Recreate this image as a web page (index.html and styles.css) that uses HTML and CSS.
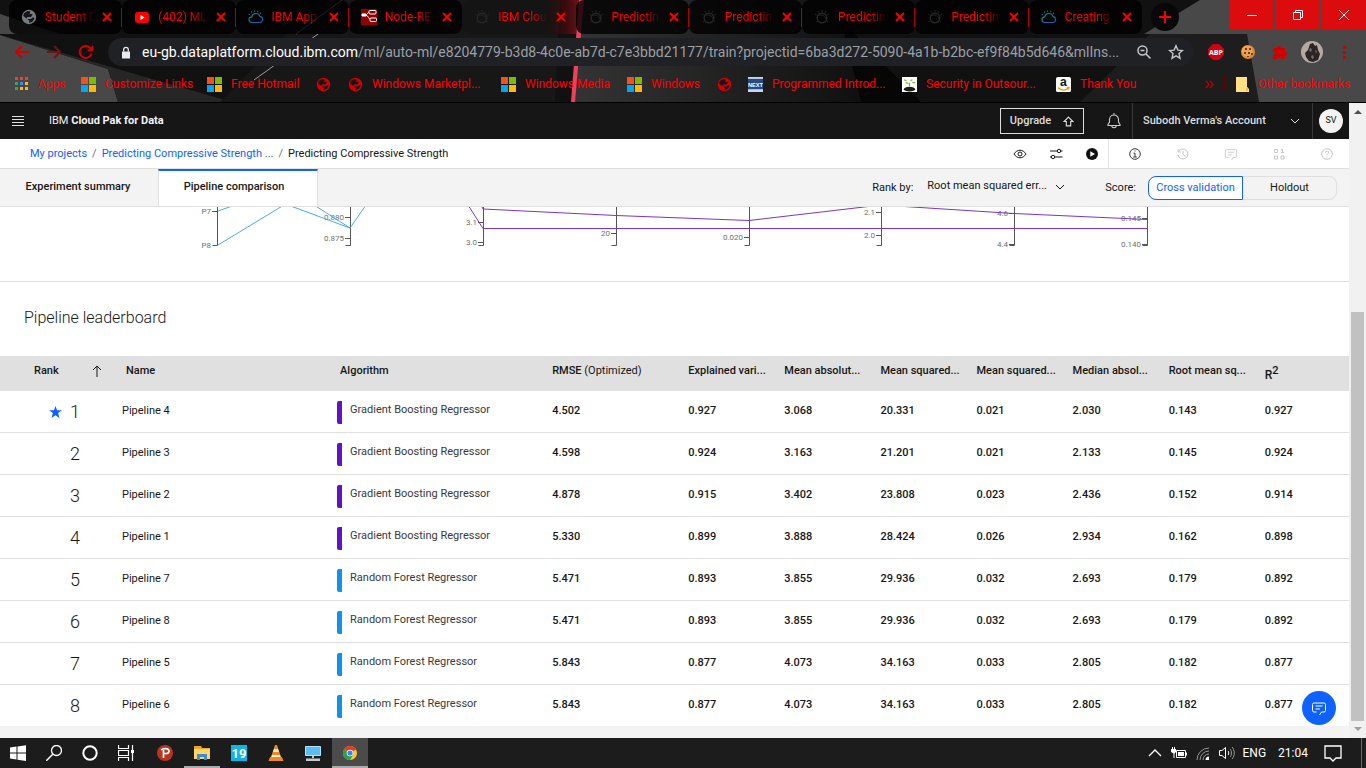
FILE: index.html
```html
<!DOCTYPE html>
<html lang="en">
<head>
<meta charset="utf-8">
<title>IBM Cloud Pak for Data</title>
<link rel="stylesheet" href="styles.css">
</head>
<body>
<svg class="defs" aria-hidden="true">
  <linearGradient id="cg" x1="0" y1="0" x2="1" y2="1"><stop offset="0" stop-color="#1b8f80"/><stop offset="1" stop-color="#1458b8"/></linearGradient>
  <linearGradient id="beam" x1="0" x2="1" y1="0" y2="0"><stop offset="0" stop-color="#600" stop-opacity="0"/><stop offset="1" stop-color="#c4141c"/></linearGradient>
  <linearGradient id="mid" x1="0" x2="1" y1="0" y2="0"><stop offset="0" stop-color="#343434"/><stop offset="1" stop-color="#0a0a0a"/></linearGradient>
  <symbol id="globe" viewBox="0 0 16 16"><circle cx="8" cy="8" r="7.200" fill="currentColor"/><path d="M3 4.200 6.500 2l3 .6-1 2.200 3.300.4L10 8H6.500l-.8 1.500L2.200 7zM6.500 10h3.200l2.600-1.700 1.200 1-1.900 3.300L8 14l.3-2.200z" fill="#161616"/></symbol>
  <symbol id="ms" viewBox="0 0 15 15"><path fill="#f4511e" d="M0 0h7v7H0z"/><path fill="#7fba00" d="M8 0h7v7H8z"/><path fill="#00a4ef" d="M0 8h7v7H0z"/><path fill="#ffb900" d="M8 8h7v7H8z"/></symbol>
  <symbol id="cloud" viewBox="0 0 18 16"><path d="M4.500 14.200a3.200 3.200 0 0 1-.3-6.400 4.800 4.800 0 0 1 9.200-.5 3.500 3.500 0 0 1 .2 6.900z" fill="none" stroke="url(#cg)" stroke-width="1.300"/><path d="M2.200 5.500 1 4.800M4.300 3.100l-.7-1.300M7.400 2V.6M10.700 2.200l.6-1.300M13.500 4.200l1.200-1" stroke="#1b8f80" stroke-width="1.200"/></symbol>
  <symbol id="watson" viewBox="0 0 16 16"><circle cx="8" cy="9" r="4.800" fill="none" stroke="currentColor" stroke-width="1.500"/><path d="M3 7c3-2 8-1 9 3M1 5l1.500 1M4 2l1 1.600M8 1v2M12 2l-1 1.600M15 5l-1.500 1M2 13l1.300-1M14 13l-1.300-1" fill="none" stroke="currentColor"/></symbol>
  <symbol id="x" viewBox="0 0 10 10"><path d="m1 1 8 8M9 1 1 9" stroke="currentColor" stroke-width="1.800"/></symbol>
  <symbol id="down" viewBox="0 0 10 10"><path d="m1 3 4 4 4-4" fill="none" stroke="currentColor"/></symbol>
  <symbol id="chat" viewBox="0 0 16 16"><path d="M5.500 12H3a1.500 1.500 0 0 1-1.500-1.500v-6A1.500 1.500 0 0 1 3 3h10a1.500 1.500 0 0 1 1.500 1.500v6A1.500 1.500 0 0 1 13 12h-2.500l-2 3M4.500 6h7M4.500 9H9" fill="none" stroke="currentColor"/></symbol>
</svg>

<header class="browser">
  <svg class="wallpaper" viewBox="0 0 1366 102" preserveAspectRatio="none" aria-hidden="true">
    <path fill="#111" d="M0 0h1366v102H0z"/>
    <path fill="#484848" d="m0 14 60 20H0zM0 35l108 34 10 33H0z"/>
    <path fill="#262626" d="m0 35 232 67H118l-10-33z"/>
    <path fill="#171717" d="M320 0h240l-5 102H220z"/>
    <path fill="url(#mid)" d="M581 0h260l70 102H572z"/>
    <path fill="#060606" d="m841 20 80 82h-60z"/>
    <path fill="#1d1d1d" d="m1150 34 50-34h46l14 102h-180z"/>
    <path fill="#484848" d="M1200 0h166v102h-107l-12-68h-47l-56 0z"/>
    <path stroke="#999" d="m342 0-46 34M318 34l-64 46"/>
    <path fill="url(#beam)" d="M545 0h36l-5 34h-31z" opacity=".6"/>
    <path fill="#ee405a" d="M579 0h5l-9 102h-4z"/>
  </svg>
  <div class="tabrow">
    <nav class="tabs" aria-label="Browser tabs">
      <div class="tab sep"><svg class="g16 grey"><use href="#globe"/></svg><span>Student D</span><button aria-label="Close tab"><svg><use href="#x"/></svg></button></div>
      <div class="tab sep"><svg class="g16" viewBox="0 0 16 16"><rect x="1" y="3" width="14" height="11" rx="3" fill="#f00"/><path d="m6.500 6 4 2.500-4 2.500z" fill="#fff"/></svg><span>(402) ML</span><button aria-label="Close tab"><svg><use href="#x"/></svg></button></div>
      <div class="tab sep"><svg class="g16"><use href="#cloud"/></svg><span>IBM App</span><button aria-label="Close tab"><svg><use href="#x"/></svg></button></div>
      <div class="tab"><svg class="g16" viewBox="0 0 16 16"><path fill="#8f0000" d="M0 0h16v16H0z"/><path d="M0 6h4c3 0 2-3 5-3M4 6c4 0 3 5 7 5" stroke="#fff" fill="none"/><rect x="8" y="1.500" width="7" height="3.500" rx="1" fill="#8f0000" stroke="#fff"/><rect x="9" y="9" width="6.500" height="3.500" rx="1" fill="#8f0000" stroke="#fff"/><rect x="1" y="4.500" width="4" height="3" fill="#fff"/></svg><span>Node-RE</span><button aria-label="Close tab"><svg><use href="#x"/></svg></button></div>
      <div class="tab current"><svg class="g16 dim"><use href="#watson"/></svg><span>IBM Clou</span><button aria-label="Close tab"><svg><use href="#x"/></svg></button></div>
      <div class="tab sep"><svg class="g16 dim"><use href="#watson"/></svg><span>Predictin</span><button aria-label="Close tab"><svg><use href="#x"/></svg></button></div>
      <div class="tab sep"><svg class="g16 dim"><use href="#watson"/></svg><span>Predictin</span><button aria-label="Close tab"><svg><use href="#x"/></svg></button></div>
      <div class="tab sep"><svg class="g16 dim"><use href="#watson"/></svg><span>Predictin</span><button aria-label="Close tab"><svg><use href="#x"/></svg></button></div>
      <div class="tab sep"><svg class="g16 dim"><use href="#watson"/></svg><span>Predictin</span><button aria-label="Close tab"><svg><use href="#x"/></svg></button></div>
      <div class="tab"><svg class="g16"><use href="#cloud"/></svg><span>Creating</span><button aria-label="Close tab"><svg><use href="#x"/></svg></button></div>
    </nav>
    <button class="newtab" aria-label="New tab"><svg viewBox="0 0 12 12"><path d="M6 0v12M0 6h12" stroke="red" stroke-width="2"/></svg></button>
    <div class="wincontrols">
      <button aria-label="Minimize"><svg viewBox="0 0 12 12"><path d="M1 6.500h10" stroke="#fff"/></svg></button>
      <button aria-label="Restore"><svg viewBox="0 0 12 12"><path d="M1.500 3.500h7v7h-7zM3.500 3.500v-2h7v7h-2" stroke="#fff" fill="none"/></svg></button>
      <button aria-label="Close"><svg viewBox="0 0 12 12"><path d="m1 1 10 10M11 1 1 11" stroke="#fff"/></svg></button>
    </div>
  </div>
  <div class="toolbar">
    <button aria-label="Back"><svg viewBox="0 0 16 16"><path d="M15 8H2M8 2 2 8l6 6" fill="none" stroke="#d00000" stroke-width="2"/></svg></button>
    <button aria-label="Forward"><svg viewBox="0 0 16 16"><path d="M1 8h13M8 2l6 6-6 6" fill="none" stroke="#6e1414" stroke-width="2"/></svg></button>
    <button aria-label="Reload"><svg viewBox="0 0 16 16"><path d="M13.500 9.500A6 6 0 1 1 12 3.800l1 1" fill="none" stroke="#d00000" stroke-width="2"/><path d="M15 1v6H9z" fill="#d00000"/></svg></button>
    <div class="omnibox">
      <svg class="lock" viewBox="0 0 10 12"><path d="M1 5h8v7H1z" fill="#e8eaed"/><path d="M2.700 5V3.200a2.300 2.300 0 0 1 4.600 0V5" fill="none" stroke="#e8eaed" stroke-width="1.300"/></svg>
      <p class="url"><b>eu-gb.dataplatform.cloud.ibm.com</b>/ml/auto-ml/e8204779-b3d8-4c0e-ab7d-c7e3bbd21177/train?projectid=6ba3d272-5090-4a1b-b2bc-ef9f84b5d646&amp;mlIns...</p>
      <button aria-label="Zoom"><svg viewBox="0 0 16 16"><circle cx="6.500" cy="6.500" r="4.500" fill="none" stroke="#c4c7ca" stroke-width="1.500"/><path d="M4.500 6.500h4M10 10l4.500 4.500" stroke="#c4c7ca" stroke-width="1.600"/></svg></button>
      <button aria-label="Bookmark this page"><svg viewBox="0 0 16 16"><path d="m8 1.800 1.900 4.300 4.600.4-3.500 3.100 1 4.600-4-2.400-4 2.400 1-4.600-3.500-3.100 4.600-.4z" fill="none" stroke="#c4c7ca" stroke-width="1.400"/></svg></button>
    </div>
    <div class="exts">
      <button aria-label="Adblock Plus"><svg viewBox="0 0 16 16"><path fill="#d00010" d="M5 0h6l5 5v6l-5 5H5l-5-5V5z"/><text x="8" y="10.500" text-anchor="middle" class="abp">ABP</text></svg></button>
      <button aria-label="Cookies"><svg viewBox="0 0 16 16"><circle cx="8" cy="8" r="7" fill="#d98a35"/><circle cx="7" cy="7" r="5.500" fill="#eda34d"/><path d="M5 4h2v2H5zM9 4h2v2H9zM4 8h2v2H4zM8 8h2v2H8zM11 9h2v2h-2zM7 12h2v1H7z" fill="#713c17"/></svg></button>
      <button aria-label="Extensions"><svg viewBox="0 0 16 16"><path fill="#d00000" d="M1 4h4a2 2 0 1 1 4 0h4v4a2 2 0 1 1 0 4v3H9a2 2 0 1 0-4 0H1v-4a2 2 0 1 0 0-4z"/></svg></button>
      <button class="face" aria-label="Profile"><svg viewBox="0 0 22 22"><circle cx="11" cy="11" r="11" fill="#b5aaa3"/><path d="m9 3 3-1 2 3 2-1 1 5 2 4-2 6-5 2-4-1-3-4-1-4 3-3z" fill="#2c2523"/><path d="m9 7 2 1-1 3-2-1zM14 9l2 1-1 3zM10 15l2-1 1 3-2 1z" fill="#786b65"/></svg></button>
      <button aria-label="Menu"><svg viewBox="0 0 16 16"><path fill="#d00000" d="M7 2h3v3H7zM7 7h3v3H7zM7 12h3v3H7z"/></svg></button>
    </div>
  </div>
  <nav class="bookmarks" aria-label="Bookmarks">
    <a href="#"><svg class="g14" viewBox="0 0 14 14"><path fill="#ea4335" d="M0 0h3v3H0zM5 0h3v3H5zM10 0h3v3h-3z"/><path fill="#34a853" d="M0 5h3v3H0zM0 10h3v3H0z"/><path fill="#4285f4" d="M5 5h3v3H5z"/><path fill="#fbbc05" d="M10 5h3v3h-3zM5 10h3v3H5zM10 10h3v3h-3z"/></svg>Apps</a>
    <a href="#"><svg><use href="#ms"/></svg>Customize Links</a>
    <a href="#"><svg><use href="#ms"/></svg>Free Hotmail</a>
    <a href="#" aria-label="Bookmark"><svg><use href="#globe"/></svg></a>
    <a href="#"><svg><use href="#globe"/></svg>Windows Marketpl...</a>
    <a href="#"><svg><use href="#ms"/></svg>Windows Media</a>
    <a href="#"><svg><use href="#ms"/></svg>Windows</a>
    <a href="#" aria-label="Bookmark"><svg><use href="#globe"/></svg></a>
    <a href="#"><svg viewBox="0 0 16 16"><path fill="#c9d4e6" d="M0 0h16v16H0z"/><path fill="#274a86" d="M0 2h16v11H0z"/><text x="8" y="11" text-anchor="middle" class="next">NEXT</text></svg>Programmed Introd...</a>
    <a href="#"><svg viewBox="0 0 16 16"><path fill="#fff" d="M0 0h16v16H0z"/><ellipse cx="8" cy="13" rx="6" ry="2.500" fill="#1c1d14"/><path d="M8 10V6M2 3l3 1M4 6l3 1M9 4l2-1M11 6h3" stroke="#72b82f" stroke-width="1.200"/></svg>Security in Outsour...</a>
    <a href="#"><svg viewBox="0 0 16 16"><rect width="16" height="16" rx="2" fill="#fff"/><text x="8" y="10" text-anchor="middle" class="amz">a</text><path d="M2 11.500c4 3 8 3 11 .5M11.500 11h2.500l-.5 2.500" stroke="#f79400" stroke-width="1.300" fill="none"/></svg>Thank You</a>
    <button class="more" aria-label="More bookmarks"><svg viewBox="0 0 10 10"><path d="m1 1 3.500 4L1 9M5.500 1 9 5 5.500 9" fill="none" stroke="#c00000" stroke-width="1.500"/></svg></button>
    <a class="other" href="#"><svg viewBox="0 0 15 15"><path fill="#ffe083" d="M1 0h11v10l2 2v3H1z"/><path fill="#efc04d" d="M11 14V11l2-1v4z"/></svg>Other bookmarks</a>
  </nav>
</header>

<div class="viewport">
  <div class="page">
    <header class="ibm">
      <button class="menu" aria-label="Main menu"><svg viewBox="0 0 14 10"><path d="M1 .5h12M1 3.500h12M1 6.500h12M1 9.500h12" stroke="#ddd"/></svg></button>
      <p class="brand">IBM <b>Cloud Pak for Data</b></p>
      <button class="upgrade">Upgrade <svg viewBox="0 0 10 10"><path d="m5 1 4 4H7v4H3V5H1z" fill="none" stroke="currentColor"/></svg></button>
      <button class="bell" aria-label="Notifications"><svg viewBox="0 0 16 16"><path d="M8 0v2M2 12.500v-1L3.500 9V6.500a4.500 4.500 0 0 1 9 0V9l1.500 2.500v1zM5.800 12.500a2.200 2.200 0 0 0 4.400 0" fill="none" stroke="#ccc" stroke-width="1.100"/></svg></button>
      <button class="account">Subodh Verma's Account <svg><use href="#down"/></svg></button>
      <button class="avatar"><span>SV</span></button>
    </header>
    <div class="crumbs">
      <nav aria-label="Breadcrumb"><a href="#">My projects</a><i>/</i><a href="#">Predicting Compressive Strength ...</a><i>/</i><span>Predicting Compressive Strength</span></nav>
      <div class="tools">
        <button aria-label="View"><svg viewBox="0 0 14 14"><path d="M1 7c3-5 9-5 12 0-3 5-9 5-12 0z" fill="none" stroke="currentColor"/><circle cx="7" cy="7" r="2" fill="none" stroke="currentColor"/></svg></button>
        <button aria-label="Settings"><svg viewBox="0 0 14 14"><path d="M1 4h7M12 4h1.500M1 10h1M6 10h7.500" stroke="currentColor"/><circle cx="10" cy="4" r="1.700" fill="none" stroke="currentColor"/><circle cx="4" cy="10" r="1.700" fill="none" stroke="currentColor"/></svg></button>
        <button aria-label="Run"><svg viewBox="0 0 14 14"><circle cx="7" cy="7" r="6" fill="#111"/><path d="M5.300 4.200 10 7l-4.700 2.800z" fill="#fff"/></svg></button>
      </div>
      <div class="tools info">
        <button aria-label="Information"><svg viewBox="0 0 14 14"><circle cx="7" cy="7" r="5.300" fill="none" stroke="currentColor"/><path d="M5.500 6.200H7V10M5.200 10h3.600M6.500 4h1" fill="none" stroke="currentColor"/></svg></button>
        <button disabled aria-label="History"><svg viewBox="0 0 14 14"><path d="M2 2v3h3M2.300 5A5 5 0 1 1 2 8M7 4v3.500l2.500 2" fill="none" stroke="currentColor"/></svg></button>
        <button disabled aria-label="Comments"><svg><use href="#chat"/></svg></button>
        <button disabled aria-label="Data"><svg viewBox="0 0 14 14"><path d="M2.500 2.500h3v3h-3zM2.500 9h3v3h-3zM9 9h3v3H9zM9 2.500h1.500v3M9 5.500h3" fill="none" stroke="currentColor"/></svg></button>
        <button disabled aria-label="Help"><svg viewBox="0 0 14 14"><circle cx="7" cy="7" r="5.300" fill="none" stroke="currentColor"/><path d="M5.500 5.700c0-2 3-2 3 0 0 1-1.500 1-1.500 2.500M7 9.500v1" fill="none" stroke="currentColor"/></svg></button>
      </div>
    </div>
    <div class="viewbar">
      <div class="viewtabs" role="tablist">
        <button role="tab">Experiment summary</button>
        <button role="tab" aria-selected="true">Pipeline comparison</button>
      </div>
      <label class="rank" for="rankby">Rank by:</label>
      <div class="picker"><select id="rankby"><option>Root mean squared err...</option></select><svg><use href="#down"/></svg></div>
      <span class="score">Score:</span>
      <div class="segments"><button class="on" aria-pressed="true">Cross validation</button><button aria-pressed="false">Holdout</button></div>
    </div>

    <section class="chart">
      <svg viewBox="0 207 1349 74" role="img" aria-label="Pipeline metric chart">
        <g class="axis">
          <path d="M217.500 207v38.500h-5M212 211.500h5M350.500 207v38.500h-5M345 217.500h5M345 238.500h5M483.500 207v38.500h-5M478 222.500h5M478 242.500h5M616.500 207v38.500h-5M611 233.500h5M749.500 207v38.500h-5M744 237.500h5M881.500 207v38.500h-5M876 212.500h5M876 235.500h5M1014.500 207v38.500h-5M1009 213.500h5M1009 244.500h5M1147.500 207v38.500h-5M1142 218.500h5M1142 244.500h5"/>
        </g>
        <g class="ticks">
          <text x="211" y="214">P7</text><text x="211" y="248">P8</text>
          <text x="344" y="220">0.880</text><text x="344" y="241">0.875</text>
          <text x="477" y="225">3.1</text><text x="477" y="245">3.0</text>
          <text x="610" y="236">20</text><text x="743" y="240">0.020</text>
          <text x="875" y="215">2.1</text><text x="875" y="238">2.0</text>
          <text x="1008" y="216">4.6</text><text x="1008" y="247">4.4</text>
          <text x="1141" y="221">0.145</text><text x="1141" y="247">0.140</text>
        </g>
        <path class="forest" d="m218 211 40-14M218 245l66-40M288 205l62 23M314 205l36 23 16-23"/>
        <path class="boost" d="m468 205 15 23.500h664M481 205l2 4 133 6.500 133 5L881 205l133 8.500 133 6"/>
      </svg>
    </section>

    <section class="leaderboard">
      <h2>Pipeline leaderboard</h2>
      <table>
        <colgroup><col class="c-rank"><col class="c-name"><col class="c-algo"><col class="c-rmse"><col span="7" class="c-num"></colgroup>
        <thead><tr><th class="rankhead"><div>Rank <svg viewBox="0 0 10 12"><path d="M5 12V1M1 5l4-4 4 4" fill="none" stroke="#161616"/></svg></div></th><th class="wide">Name</th><th class="wide">Algorithm</th><th>RMSE <span>(Optimized)</span></th><th>Explained vari...</th><th>Mean absolut...</th><th>Mean squared...</th><th>Mean squared...</th><th>Median absol...</th><th>Root mean sq...</th><th>R<sup>2</sup></th></tr></thead>
        <tbody>
          <tr><td class="n"><svg viewBox="0 0 14 13"><path fill="#0f62fe" d="m7 0 1.700 4.500H14l-4.200 3.200L11.300 13 7 9.900 2.700 13l1.500-5.300L0 4.500h5.300z"/></svg>1</td><td>Pipeline 4</td><td><div class="algo gb">Gradient Boosting Regressor</div></td><td>4.502</td><td>0.927</td><td>3.068</td><td>20.331</td><td>0.021</td><td>2.030</td><td>0.143</td><td>0.927</td></tr>
          <tr><td class="n">2</td><td>Pipeline 3</td><td><div class="algo gb">Gradient Boosting Regressor</div></td><td>4.598</td><td>0.924</td><td>3.163</td><td>21.201</td><td>0.021</td><td>2.133</td><td>0.145</td><td>0.924</td></tr>
          <tr><td class="n">3</td><td>Pipeline 2</td><td><div class="algo gb">Gradient Boosting Regressor</div></td><td>4.878</td><td>0.915</td><td>3.402</td><td>23.808</td><td>0.023</td><td>2.436</td><td>0.152</td><td>0.914</td></tr>
          <tr><td class="n">4</td><td>Pipeline 1</td><td><div class="algo gb">Gradient Boosting Regressor</div></td><td>5.330</td><td>0.899</td><td>3.888</td><td>28.424</td><td>0.026</td><td>2.934</td><td>0.162</td><td>0.898</td></tr>
          <tr><td class="n">5</td><td>Pipeline 7</td><td><div class="algo rf">Random Forest Regressor</div></td><td>5.471</td><td>0.893</td><td>3.855</td><td>29.936</td><td>0.032</td><td>2.693</td><td>0.179</td><td>0.892</td></tr>
          <tr><td class="n">6</td><td>Pipeline 8</td><td><div class="algo rf">Random Forest Regressor</div></td><td>5.471</td><td>0.893</td><td>3.855</td><td>29.936</td><td>0.032</td><td>2.693</td><td>0.179</td><td>0.892</td></tr>
          <tr><td class="n">7</td><td>Pipeline 5</td><td><div class="algo rf">Random Forest Regressor</div></td><td>5.843</td><td>0.877</td><td>4.073</td><td>34.163</td><td>0.033</td><td>2.805</td><td>0.182</td><td>0.877</td></tr>
          <tr><td class="n">8</td><td>Pipeline 6</td><td><div class="algo rf">Random Forest Regressor</div></td><td>5.843</td><td>0.877</td><td>4.073</td><td>34.163</td><td>0.033</td><td>2.805</td><td>0.182</td><td>0.877</td></tr>
        </tbody>
      </table>
    </section>
    <button class="chat" aria-label="Open chat"><svg><use href="#chat"/></svg></button>
  </div>
  <div class="scrollbar" aria-hidden="true"><svg viewBox="0 0 17 17"><path d="m5 11 4-4 4 4z" fill="#505050"/></svg><div class="track"><div class="thumb"></div></div><svg viewBox="0 0 17 17"><path d="m5 6 4 4 4-4z" fill="#a0a0a0"/></svg></div>
</div>

<footer class="taskbar">
  <button aria-label="Start"><svg viewBox="0 0 16 16"><path fill="#fff" d="m0 2.500 6.500-.9v6H0zM7.500 1.400 16 .2v7.400H7.500zM0 8.500h6.500v6L0 13.600zM7.500 8.500H16v7.400l-8.500-1.200z"/></svg></button>
  <button aria-label="Search"><svg viewBox="0 0 16 16"><circle cx="10.500" cy="5.500" r="5" fill="none" stroke="#fff" stroke-width="1.300"/><path d="m7 9-7 7" stroke="#fff" stroke-width="1.500"/></svg></button>
  <button aria-label="Cortana"><svg viewBox="0 0 16 16"><circle cx="8" cy="8" r="6.700" fill="none" stroke="#fff" stroke-width="2"/></svg></button>
  <button aria-label="Task view"><svg viewBox="0 0 16 16"><path d="M.5 0v3.500h10V0M.5 16v-3.500h10V16M.5 5.500h10v5H.5zM14.500 0v16" fill="none" stroke="#fff" stroke-width="1.200"/><path fill="#fff" d="M13 5h3v3h-3z"/></svg></button>
  <div class="apps">
    <button aria-label="PicsArt"><svg viewBox="0 0 16 16"><circle cx="8" cy="8" r="8" fill="#b9351f"/><path d="M6.500 13V5M4 5c2-2 8-2 8 1s-4 3-5 2" fill="none" stroke="#fff" stroke-width="1.700"/></svg></button>
    <button class="running" aria-label="File Explorer"><svg viewBox="0 0 16 16"><path fill="#e5a72c" d="M0 1h7l1 2h8v4H0z"/><path fill="#ffd566" d="M0 4h16v10H0z"/><path fill="#3d8ed0" d="M3 15V9h10v6h-3v-3H6v3z"/></svg></button>
    <button aria-label="Calendar"><svg viewBox="0 0 16 16"><path fill="#0cb6e6" d="M0 0h16v16H0z"/><text x="8" y="13" text-anchor="middle" class="day">19</text></svg></button>
    <button aria-label="VLC"><svg viewBox="0 0 16 16"><path fill="#f18818" d="M7 0h2l4 12H3z"/><path fill="#eee" d="M6 4h4l1 3H5zM4 10h8l.7 2H3.300z"/><path fill="#f18818" d="M2 12h12l1.500 4H.5z"/></svg></button>
    <button aria-label="This PC"><svg viewBox="0 0 16 16"><path fill="#5cbdf4" stroke="#b8e2fa" d="M.5 1.500h15v9H.5z"/><path fill="#bfcbd3" d="M7 11h2v2H7zM1 13.500h14V16H1z"/></svg></button>
    <button class="running active" aria-label="Chrome"><svg viewBox="0 0 16 16"><circle cx="8" cy="8" r="7" fill="#fbc52d"/><path d="M8 8 1.900 4.500a7 7 0 0 1 12.200 0z" fill="#e33b2e"/><path d="M8 8 1.900 4.500A7 7 0 0 0 8 15l3-5z" fill="#2ca14b"/><circle cx="8" cy="8" r="3.300" fill="#fff"/><circle cx="8" cy="8" r="2.600" fill="#3e82ee"/></svg></button>
  </div>
  <div class="tray">
    <svg viewBox="0 0 16 16"><path d="m2 11 6-6 6 6" fill="none" stroke="#fff" stroke-width="1.300"/></svg>
    <svg viewBox="0 0 16 16"><path d="M5.500 5.500h9v7h-9z" fill="none" stroke="#fff"/><path fill="#fff" d="M7 7h6v4H7zM15 7.500h1v3h-1zM0 4h5v3L3.500 8.500V13h-1V8.500L0 7zM1 2h1v2H1zM3 2h1v2H3z"/></svg>
    <svg viewBox="0 0 16 16"><path d="M2 15A12 12 0 0 1 14 3M5 15a9 9 0 0 1 9-9M8 15a6 6 0 0 1 6-6" fill="none" stroke="#999"/><path d="M10.500 15a3.500 3.500 0 0 1 3.500-3.500V15z" fill="#fff"/></svg>
    <svg viewBox="0 0 16 16"><path d="M.5 5.500H3l3.500-3v11l-3.500-3H.5zM9 6c1 1 1 3 0 4" fill="none" stroke="#fff"/><path d="M11 4c2 2 2 6 0 8M13 2c3 3 3 9 0 12" fill="none" stroke="#999"/></svg>
    <span>ENG</span><span>21:04</span>
    <svg class="note" viewBox="0 0 18 18"><path d="M1 2h16v12h-5l-3 3-3-3H1z" fill="none" stroke="#fff" stroke-width="1.300"/></svg>
  </div>
</footer>
</body>
</html>
```
FILE: styles.css
```css
* { box-sizing: border-box; }
body { margin: 0; height: 100vh; display: flex; flex-direction: column; overflow: hidden; font: 11px/16px Roboto, "Liberation Sans", sans-serif; color: #161616; background: #fff; }
button { font: inherit; color: inherit; background: none; border: 0; padding: 0; display: flex; align-items: center; justify-content: center; }
svg { display: block; flex: none; width: 16px; height: 16px; }
.defs { position: absolute; width: 0; height: 0; }
p, h2 { margin: 0; }
a { text-decoration: none; color: inherit; }

/* Browser frame */
.browser { position: relative; flex: none; border-bottom: 1px solid #000; font-size: 12px; color: #f00; }
.wallpaper { position: absolute; inset: 0; z-index: -1; width: 100%; height: 100%; }
.tabrow { display: flex; height: 34px; }
.tabs { flex: 0 1 1142px; padding-left: 9px; display: grid; grid-template-columns: repeat(10, 1fr); }
.tab { position: relative; display: flex; align-items: center; gap: 8px; min-width: 0; padding: 0 10px 0 12px; background: rgba(0, 0, 0, .8); border-radius: 8px; }
.tab.current { background: rgba(0, 0, 0, .1); }
.tab.sep::after { content: ""; position: absolute; right: 0; top: 8px; width: 1px; height: 19px; background: #b00000; }
.tab span { flex: 1; min-width: 0; white-space: nowrap; mask-image: linear-gradient(90deg, #000 65%, transparent 100%); }
.tab button svg { width: 10px; height: 10px; }
.grey { color: #777b82; }
.dim { color: #262626; }
.newtab { flex: none; width: 28px; height: 28px; margin: 3px 0 0 9px; border-radius: 50%; background: #080808; }
.newtab svg { width: 12px; height: 12px; }
.wincontrols { display: flex; gap: 1px; margin-left: auto; height: 29px; }
.wincontrols button { width: 45px; background: #dc0b0e; }
.wincontrols svg { width: 12px; height: 12px; }
.toolbar { display: flex; align-items: center; height: 36px; padding-left: 6px; }
.toolbar > button { width: 32px; }
.omnibox { flex: 1; min-width: 0; display: flex; align-items: center; height: 28px; margin-left: 6px; padding: 0 10px 0 13px; border-radius: 14px; background: #202124; }
.omnibox button { width: 32px; flex: none; }
.omnibox button:last-child { width: 16px; margin-left: 8px; }
.lock { width: 10px; height: 13px; }
.url { flex: 1; min-width: 0; margin-left: 11px; white-space: nowrap; font-size: 14px; line-height: 20px; color: #9aa0a6; }
.url b { font-weight: 400; color: #fff; }
.exts { display: flex; align-items: center; padding: 0 6px; }
.exts button { width: 32px; }
.face svg { width: 22px; height: 22px; }
.abp { font: bold 7px "Open Sans", sans-serif; fill: #fff; }
.next { font: bold 6px "Liberation Sans", sans-serif; fill: #fff; }
.amz { font: bold 13px "Liberation Sans", sans-serif; fill: #111; }
.bookmarks { display: grid; grid-template-columns: 66px 126px 109px 32px 153px 126px 90px 31px 154px 154px auto 28px 129px; align-items: center; height: 32px; padding: 0 13px 4px 15px; white-space: nowrap; }
.bookmarks a { display: flex; align-items: center; gap: 9px; }
.bookmarks svg { width: 15px; height: 15px; color: #d00000; }
.bookmarks .g14 { width: 14px; height: 14px; }
.bookmarks .more { justify-content: flex-start; padding-left: 9px; }
.bookmarks .more svg { width: 9px; height: 9px; }
.bookmarks .other { padding-left: 10px; height: 16px; border-left: 1px solid #600; gap: 8px; }

/* Page */
.viewport { flex: 1; min-height: 0; display: flex; }
.page { position: relative; flex: 1; min-width: 0; display: flex; flex-direction: column; background: #f3f3f3; }
.ibm { display: flex; align-items: center; height: 36px; background: #161616; color: #f3f3f3; }
.menu { width: 36px; }
.menu svg { width: 14px; height: 10px; }
.brand { margin-left: 13px; }
.brand b { font-weight: 700; }
.upgrade { gap: 12px; height: 26px; width: 84px; margin-left: auto; border: 1px solid #ddd; font-weight: 500; color: #ddd; }
.upgrade svg { width: 11px; height: 11px; }
.bell { width: 48px; padding-left: 12px; }
.account { justify-content: space-between; align-self: stretch; width: 181px; padding: 0 12px 0 10px; border: solid #393939; border-width: 0 1px; font-weight: 500; color: #ddd; }
.account svg { width: 10px; height: 10px; }
.avatar { width: 36px; }
.avatar span { width: 24px; height: 24px; border-radius: 50%; background: #f3f3f3; color: #161616; font-size: 9px; line-height: 22px; }
.crumbs { display: flex; height: 30px; background: #fff; border-bottom: 1px solid #e0e0e0; }
.crumbs nav { display: flex; align-items: center; flex: 1; padding-left: 30px; }
.crumbs nav a { color: #0f62fe; }
.crumbs i { margin: 0 5px; font-style: normal; color: #6f6f6f; }
.tools { display: flex; align-items: center; }
.tools button { width: 36px; padding-left: 3px; }
.tools svg { width: 14px; height: 14px; }
.info { border-left: 1px solid #e0e0e0; }
.info button { width: 48px; color: #393939; }
.info button:disabled { color: #c6c6c6; }
.viewbar { display: flex; align-items: center; height: 38px; border-bottom: 1px solid #e0e0e0; background: #f3f3f3; }
.viewtabs { display: flex; align-self: stretch; margin-right: auto; font-weight: 500; }
.viewtabs button { width: 158px; padding: 0 2px 2px 0; }
.viewtabs button + button { width: 160px; padding: 0 8px 4px 0; border: solid #e0e0e0; border-width: 2px 1px 0; border-top-color: #0f62fe; background: #fff; }
.picker { position: relative; width: 138px; margin-left: 14px; }
.picker select { appearance: none; width: 100%; border: 0; padding: 0 0 3px; background: none; font: inherit; color: inherit; }
.picker svg { position: absolute; right: 0; top: 4px; width: 10px; height: 10px; pointer-events: none; }
.score { margin-left: 40px; }
.segments { display: flex; width: 189px; height: 24px; margin: 0 12px; }
.segments button { flex: 1; border: 1px solid #e0e0e0; border-radius: 0 8px 8px 0; border-left: 0; }
.segments .on { border: 1px solid #0f62fe; border-radius: 8px 0 0 8px; background: #fff; color: #0f62fe; }
.chart { background: #fff; border-bottom: 1px solid #e0e0e0; }
.chart svg { width: 100%; height: auto; }
.axis path { fill: none; stroke: #555; }
.ticks { font-size: 8px; fill: #6f6f6f; text-anchor: end; }
.forest, .boost { fill: none; stroke: #4aa9e8; }
.boost { stroke: #7a35c8; }
.leaderboard { background: #fff; }
h2 { padding: 24px 24px 26px; font-size: 16px; line-height: 24px; font-weight: 300; }
table { width: 100%; table-layout: fixed; border-collapse: separate; border-spacing: 0; }
.c-rank { width: 8.15%; }
.c-name { width: 15.86%; }
.c-algo { width: 16.01%; }
.c-rmse { width: 10.08%; }
.c-num { width: 7.12%; }
th { height: 35px; padding: 0 0 6px 12px; background: #e0e0e0; text-align: left; font-weight: 500; white-space: nowrap; }
th.wide { padding-left: 16px; }
th span { font-weight: 400; }
th sup { font-size: 11px; line-height: 0; }
th:last-child { font-size: 12px; padding: 3px 0 0 12px; }
.rankhead { padding: 0 8px 6px 34px; }
.rankhead div { display: flex; justify-content: space-between; align-items: center; }
.rankhead svg { width: 10px; height: 12px; }
td { height: 42px; padding: 0 0 2px 12px; border-bottom: 1px solid #e0e0e0; font-weight: 500; white-space: nowrap; }
tr:last-child td { height: 41px; border-bottom: 0; }
td:nth-child(-n+3) { font-weight: 400; }
.n { padding: 0 30px 0 0; text-align: right; font-size: 18px; }
td.n { font-weight: 300; }
.n svg { display: inline-block; width: 13px; height: 12px; margin-right: 8px; }
.algo { display: flex; align-items: center; height: 23px; padding: 0 0 4px 8px; margin: 3px 0 0 1px; border-left: 5px solid #6112c5; color: #393939; border-radius: 2px; }
.algo.rf { border-left-color: #1192e8; }
.chat { position: absolute; right: 13px; bottom: 13px; width: 34px; height: 34px; border-radius: 50%; background: #0f62fe; color: #fff; }
.scrollbar { display: flex; flex-direction: column; width: 17px; background: #f1f1f1; }
.scrollbar svg { width: 17px; height: 17px; }
.track { flex: 1; padding: 0 2px; display: flex; align-items: flex-end; }
.thumb { width: 100%; height: 68%; background: #c1c1c1; }

/* Taskbar */
.taskbar { flex: none; display: flex; height: 30px; background: #1c1c1c; color: #fff; font-size: 12px; }
.taskbar button { width: 36px; border: solid transparent; border-width: 2px 0; }
.apps { display: flex; gap: 1px; margin-left: 3px; }
.taskbar .running { border-bottom-color: #aaa; background-clip: padding-box; }
.taskbar .active { background: #4b4b4b; border-bottom-color: #aaa; }
.day { font: bold 13px Roboto, sans-serif; fill: #fff; }
.tray { display: flex; align-items: center; gap: 9px; margin-left: auto; margin-right: 4px; padding-right: 19px; border-right: 1px solid #666; }
.tray svg { margin-right: -1px; }
.tray span + span { margin-left: 3px; }
.tray .note { width: 18px; height: 18px; margin: 0 0 0 7px; }
```
